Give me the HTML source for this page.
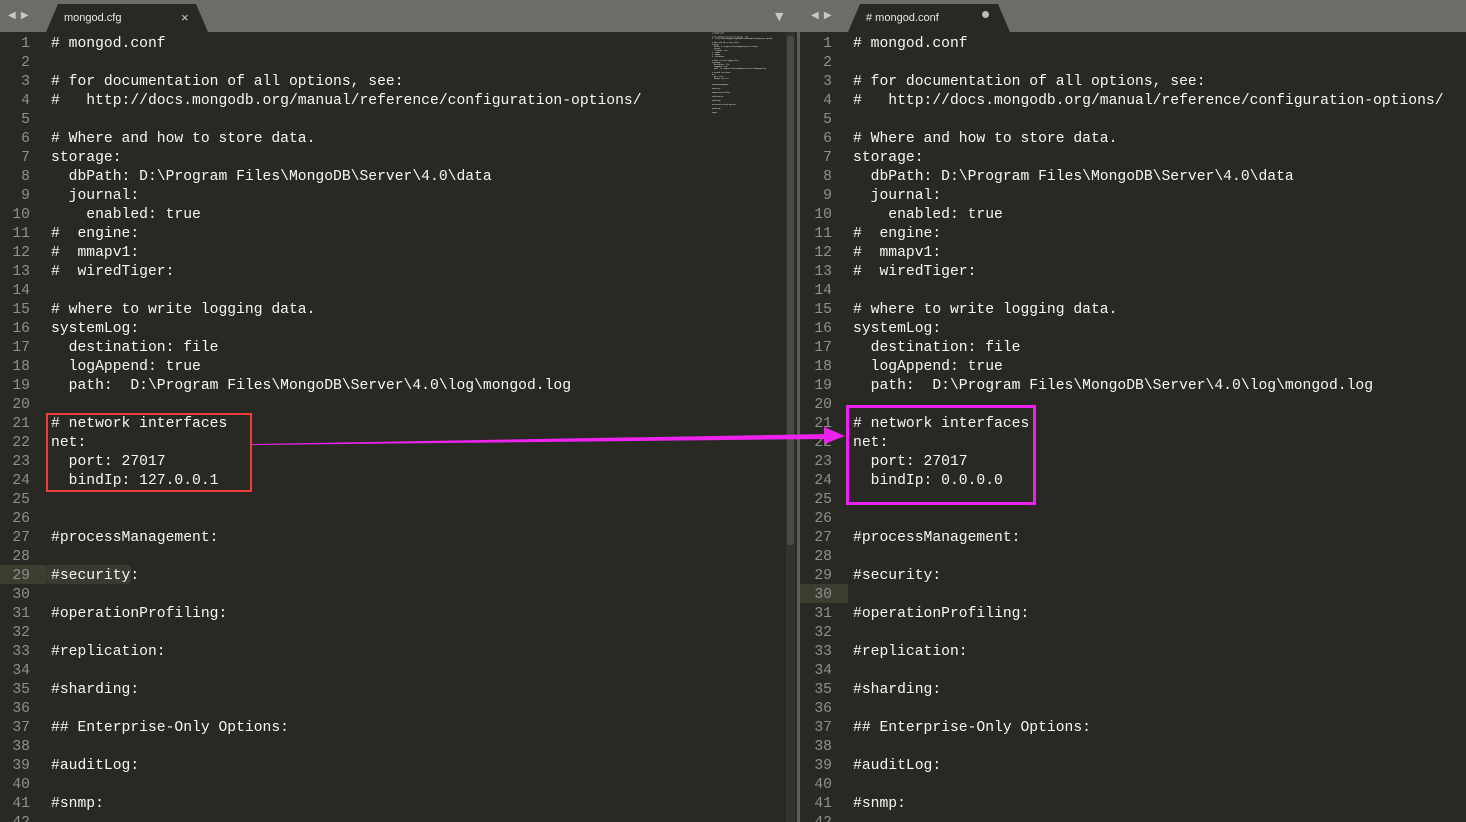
<!DOCTYPE html>
<html><head><meta charset="utf-8"><style>
*{margin:0;padding:0;box-sizing:border-box}
html,body{width:1466px;height:822px;overflow:hidden}
body{background:#282923;position:relative;font-family:"Liberation Mono",monospace}
.bar{position:absolute;top:0;left:0;width:1466px;height:32px;background:#6c6c68}
.tab{position:absolute;top:4px;height:28px;background:#282923;clip-path:polygon(12px 0,calc(100% - 12px) 0,100% 100%,0 100%);font-family:"Liberation Sans",sans-serif;font-size:11px;color:#e8e8e2}
.tab span{position:absolute;top:8px}
.arr{position:absolute;top:10px;color:#c8c8c4;font-size:10px;font-family:"DejaVu Sans",sans-serif;letter-spacing:1px}
.code{position:absolute;top:35px;font-size:14.7px;line-height:19px;color:#f8f8f2;white-space:pre}
.gut{position:absolute;top:35px;font-size:14.7px;line-height:19px;color:#8f908a;text-align:right;white-space:pre}
.mini{position:absolute;left:712px;top:32px;transform:scale(0.105);transform-origin:0 0;font-size:14.5px;line-height:19px;color:#c8c8c0;white-space:pre;font-weight:bold}
</style></head><body>
<div class="bar"></div>
<div class="arr" style="left:8px">◀ ▶</div>
<div class="tab" style="left:46px;width:162px"><span style="left:18px">mongod.cfg</span><span style="left:135px;top:6px;font-size:13px;color:#cfcfc9">×</span></div>
<div class="arr" style="left:775px;font-size:11px">▼</div>
<div class="arr" style="left:811px">◀ ▶</div>
<div class="tab" style="left:848px;width:162px"><span style="left:18px"># mongod.conf</span><span style="left:134px;top:7px;width:7px;height:7px;border-radius:50%;background:#bdbdb8"></span></div>

<div style="position:absolute;left:0;top:565px;width:46px;height:19px;background:#3e3d32"></div>
<div style="position:absolute;left:46px;top:565px;width:85px;height:19px;background:#3a3a33;border-radius:3px"></div>
<div class="gut" style="left:0;width:30px">1
2
3
4
5
6
7
8
9
10
11
12
13
14
15
16
17
18
19
20
21
22
23
24
25
26
27
28
29
30
31
32
33
34
35
36
37
38
39
40
41
42</div>
<div class="code" style="left:51px"># mongod.conf

# for documentation of all options, see:
#   http://docs.mongodb.org/manual/reference/configuration-options/

# Where and how to store data.
storage:
  dbPath: D:\Program Files\MongoDB\Server\4.0\data
  journal:
    enabled: true
#  engine:
#  mmapv1:
#  wiredTiger:

# where to write logging data.
systemLog:
  destination: file
  logAppend: true
  path:  D:\Program Files\MongoDB\Server\4.0\log\mongod.log

# network interfaces
net:
  port: 27017
  bindIp: 127.0.0.1


#processManagement:

#security:

#operationProfiling:

#replication:

#sharding:

## Enterprise-Only Options:

#auditLog:

#snmp:
</div>
<div class="mini"># mongod.conf

# for documentation of all options, see:
#   http://docs.mongodb.org/manual/reference/configuration-options/

# Where and how to store data.
storage:
  dbPath: D:\Program Files\MongoDB\Server\4.0\data
  journal:
    enabled: true
#  engine:
#  mmapv1:
#  wiredTiger:

# where to write logging data.
systemLog:
  destination: file
  logAppend: true
  path:  D:\Program Files\MongoDB\Server\4.0\log\mongod.log

# network interfaces
net:
  port: 27017
  bindIp: 127.0.0.1


#processManagement:

#security:

#operationProfiling:

#replication:

#sharding:

## Enterprise-Only Options:

#auditLog:

#snmp:</div>
<div style="position:absolute;left:786px;top:32px;width:9px;height:790px;background:#33332e"></div>
<div style="position:absolute;left:787px;top:36px;width:7px;height:509px;background:#4a4a45;border-radius:3px"></div>
<div style="position:absolute;left:797px;top:32px;width:3px;height:790px;background:#5e5e59"></div>

<div style="position:absolute;left:800px;top:584px;width:48px;height:19px;background:#3e3d32"></div>
<div class="gut" style="left:800px;width:32px">1
2
3
4
5
6
7
8
9
10
11
12
13
14
15
16
17
18
19
20
21
22
23
24
25
26
27
28
29
30
31
32
33
34
35
36
37
38
39
40
41
42</div>
<div class="code" style="left:853px"># mongod.conf

# for documentation of all options, see:
#   http://docs.mongodb.org/manual/reference/configuration-options/

# Where and how to store data.
storage:
  dbPath: D:\Program Files\MongoDB\Server\4.0\data
  journal:
    enabled: true
#  engine:
#  mmapv1:
#  wiredTiger:

# where to write logging data.
systemLog:
  destination: file
  logAppend: true
  path:  D:\Program Files\MongoDB\Server\4.0\log\mongod.log

# network interfaces
net:
  port: 27017
  bindIp: 0.0.0.0


#processManagement:

#security:

#operationProfiling:

#replication:

#sharding:

## Enterprise-Only Options:

#auditLog:

#snmp:
</div>

<div style="position:absolute;left:46px;top:413px;width:206px;height:79px;border:2px solid #f03c3c"></div>
<div style="position:absolute;left:846px;top:405px;width:190px;height:100px;border:3px solid #ee22ee"></div>
<svg style="position:absolute;left:0;top:0" width="1466" height="822">
<polygon points="252,444 826,434 826,439 252,445" fill="#ee22ee"/>
<polygon points="824,427 845,436 824,444" fill="#ee22ee"/>
</svg>
</body></html>
